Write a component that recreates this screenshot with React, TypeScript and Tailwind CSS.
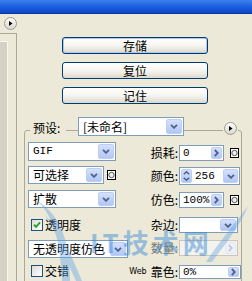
import React from 'react'

const mono = "font-['Liberation_Mono','DejaVu_Sans_Mono',monospace] text-[11px]"

function ChevDown({ color = '#4d6185' }: { color?: string }) {
  return (
    <svg width="8" height="5" viewBox="0 0 8 5">
      <path d="M1 0.8 L4 3.8 L7 0.8" fill="none" stroke={color} strokeWidth="1.8" />
    </svg>
  )
}

function ChevRight({ color = '#4d6185' }: { color?: string }) {
  return (
    <svg width="5" height="8" viewBox="0 0 5 8">
      <path d="M0.8 1 L3.8 4 L0.8 7" fill="none" stroke={color} strokeWidth="1.8" />
    </svg>
  )
}

function ArrowBtn({ w, dir = 'down', disabled }: { w: string; dir?: 'down' | 'right' | 'spin'; disabled?: boolean }) {
  const face = disabled
    ? 'border-[#e4e8f2] bg-[#eef1f8]'
    : 'border-[#bccdf6] bg-gradient-to-b from-[#d4e0fd] to-[#b2c7f5]'
  const c = disabled ? '#c3c9d8' : '#4d6185'
  return (
    <div className={`${w} h-full shrink-0 flex flex-col items-center justify-center gap-[2px] rounded-[2px] border ${face}`}>
      {dir === 'down' && <ChevDown color={c} />}
      {dir === 'right' && <ChevRight color={c} />}
      {dir === 'spin' && (
        <>
          <svg width="7" height="4" viewBox="0 0 7 4">
            <path d="M0.8 3.3 L3.5 0.8 L6.2 3.3" fill="none" stroke={c} strokeWidth="1.5" />
          </svg>
          <svg width="7" height="4" viewBox="0 0 7 4">
            <path d="M0.8 0.7 L3.5 3.2 L6.2 0.7" fill="none" stroke={c} strokeWidth="1.5" />
          </svg>
        </>
      )}
    </div>
  )
}

function Combo({ w, h, children, latin }: { w: string; h: string; children?: React.ReactNode; latin?: boolean }) {
  return (
    <div className={`${w} ${h} flex border border-[#7f9db9] bg-white p-[1px]`}>
      <div className={`flex-1 flex items-center pl-[3px] whitespace-nowrap ${latin ? mono : ''}`}>{children}</div>
      <ArrowBtn w="w-[16px]" />
    </div>
  )
}

function Field({ w, value, disabled }: { w: string; value?: string; disabled?: boolean }) {
  return (
    <div className={`${w} h-full flex border p-[1px] ${disabled ? 'border-[#c9c7ba] bg-[#f4f3ee]' : 'border-[#7f9db9] bg-white'}`}>
      <div className={`flex-1 flex items-center pl-[2px] whitespace-nowrap ${mono}`}>{value}</div>
      <ArrowBtn w="w-[11px]" dir="right" disabled={disabled} />
    </div>
  )
}

function XPButton({ children, def }: { children: React.ReactNode; def?: boolean }) {
  return (
    <div
      className={`h-[17px] w-[146px] flex items-center justify-center rounded-[3px] border border-[#003c74] bg-gradient-to-b from-white via-[#f6f5f0] to-[#dcd9cd] ${
        def ? 'shadow-[inset_0_0_0_1px_#aec6f0]' : ''
      }`}
    >
      {children}
    </div>
  )
}

function Flyout() {
  return (
    <svg width="13" height="13" viewBox="0 0 13 13">
      <defs>
        <linearGradient id="fly" x1="0" y1="0" x2="0" y2="1">
          <stop offset="0" stopColor="#ffffff" />
          <stop offset="1" stopColor="#d9d6ca" />
        </linearGradient>
      </defs>
      <circle cx="6.5" cy="6.5" r="6" fill="url(#fly)" stroke="#9d9b8e" />
      <path d="M5 4 L8.5 6.5 L5 9 Z" fill="#000" />
    </svg>
  )
}

function SqIcon() {
  return (
    <svg width="9" height="10" viewBox="0 0 9 10">
      <rect x="0.5" y="0.5" width="8" height="9" fill="#fff" stroke="#000" />
      <circle cx="4.5" cy="5" r="2.7" fill="#ededed" stroke="#444" strokeWidth="0.9" />
    </svg>
  )
}

function Check({ checked }: { checked?: boolean }) {
  return (
    <div className="w-[12px] h-[12px] shrink-0 border border-[#1c5180] bg-gradient-to-br from-[#dcdcd7] to-white flex items-center justify-center">
      {checked && (
        <svg width="8" height="8" viewBox="0 0 8 8">
          <path d="M1 3.6 L3 5.8 L7 1.4" fill="none" stroke="#21a121" strokeWidth="1.8" />
        </svg>
      )}
    </div>
  )
}

function Label({ children, muted }: { children: React.ReactNode; muted?: boolean }) {
  return (
    <div className={`w-[49px] flex justify-end items-center pr-[1px] whitespace-nowrap ${muted ? 'text-[#7d7b70]' : ''}`}>
      {children}
    </div>
  )
}

export default function App() {
  return (
    <div className="relative w-[252px] h-[281px] overflow-hidden bg-[#ece9d8] text-[12px] leading-none text-black font-['Noto_Sans_CJK_SC','DejaVu_Sans',sans-serif]">
      {/* title bar strip */}
      <div className="h-[14px] bg-gradient-to-b from-[#3b82ef] via-[#1d5fdf] to-[#0b46c6] border-b border-[#0a35a0]" />

      <div className="flex h-[267px]">
        {/* left strip */}
        <div className="w-[17px] flex flex-col">
          <div className="h-[19px] pt-[3px] pl-[4px]">
            <Flyout />
          </div>
          <div className="flex-1 border-t border-r border-[#aca899] pt-[7px]">
            <div className="h-full w-[8px] bg-[#d5d1c3] border-t border-r border-[#f7f6f1]" />
          </div>
        </div>

        {/* main */}
        <div className="flex-1 flex flex-col">
          <div className="flex flex-col gap-[8px] pt-[23px] pl-[45px]">
            <XPButton def>存储</XPButton>
            <XPButton>复位</XPButton>
            <XPButton>记住</XPButton>
          </div>

          {/* preset header over group border */}
          <div className="relative z-10 flex items-start h-[19px] mt-[13px] ml-[7px] w-[218px]">
            <div className="w-[6px]" />
            <div className="w-[36px] h-[12px] mt-[5px] pl-[3px] bg-[#ece9d8] whitespace-nowrap">预设:</div>
            <div className="w-[12px]" />
            <Combo w="w-[106px]" h="h-[19px]">[未命名]</Combo>
            <div className="w-[39px]" />
            <div className="mt-[5px] px-[1px] bg-[#ece9d8] flex">
              <Flyout />
            </div>
          </div>

          {/* group box */}
          <div className="-mt-[6px] ml-[7px] w-[218px] h-[170px] border border-[#aca899] rounded-[3px] pt-[11px] pl-[3px] flex flex-col">
            <div className="flex h-[24px]">
              <div className="w-[102px]">
                <Combo w="w-[88px]" h="h-[19px]" latin>GIF</Combo>
              </div>
              <div className="flex h-[16px] mt-[3px]">
                <Label>损耗:</Label>
                <Field w="w-[45px]" value="0" />
                <div className="ml-[6px] flex items-center">
                  <SqIcon />
                </div>
              </div>
            </div>

            <div className="flex h-[24px]">
              <div className="w-[102px] flex items-start gap-[3px]">
                <Combo w="w-[76px]" h="h-[18px]">可选择</Combo>
                <div className="mt-[4px]">
                  <SqIcon />
                </div>
              </div>
              <div className="flex h-[18px] mt-[1px]">
                <Label>颜色:</Label>
                <div className="w-[61px] h-full flex border border-[#7f9db9] bg-white p-[1px]">
                  <ArrowBtn w="w-[11px]" dir="spin" />
                  <div className={`flex-1 flex items-center pl-[3px] ${mono}`}>256</div>
                  <ArrowBtn w="w-[15px]" />
                </div>
              </div>
            </div>

            <div className="flex h-[25px]">
              <div className="w-[102px]">
                <Combo w="w-[88px]" h="h-[18px]">扩散</Combo>
              </div>
              <div className="flex h-[16px] mt-[2px]">
                <Label>仿色:</Label>
                <Field w="w-[45px]" value="100%" />
                <div className="ml-[6px] flex items-center">
                  <SqIcon />
                </div>
              </div>
            </div>

            <div className="flex h-[25px]">
              <div className="w-[102px] flex items-start pt-[4px] pl-[3px] gap-[2px]">
                <Check checked />
                <span>透明度</span>
              </div>
              <div className="flex h-[16px] mt-[2px]">
                <Label>杂边:</Label>
                <Combo w="w-[59px]" h="h-[16px]" />
              </div>
            </div>

            <div className="flex h-[25px]">
              <div className="w-[102px]">
                <Combo w="w-[100px]" h="h-[18px]">无透明度仿色</Combo>
              </div>
              <div className="flex h-[16px]">
                <Label muted>数量:</Label>
                <Field w="w-[59px]" disabled />
              </div>
            </div>

            <div className="flex h-[25px]">
              <div className="w-[102px] flex items-start pl-[3px] gap-[2px]">
                <Check />
                <span>交错</span>
              </div>
              <div className="flex h-[14px]">
                <Label>
                  <span className="text-[8px] mr-[4px] font-['DejaVu_Sans',sans-serif]">Web</span>靠色:
                </Label>
                <Field w="w-[62px]" value="0%" />
              </div>
            </div>
          </div>
        </div>
      </div>

      {/* site watermark */}
      <div className="pointer-events-none absolute inset-0">
        <svg width="252" height="281" viewBox="0 0 252 281" className="absolute left-0 top-0 opacity-40">
          <path d="M36 200 C52 214 60 236 62 281 L70 281 C70 240 60 214 36 200 Z" fill="#5ea3e6" />
          <path d="M44 214 C56 230 62 250 76 281 L82 281 C70 252 60 230 44 214 Z" fill="#5ea3e6" />
          <path d="M248 206 C236 222 222 238 206 262 L212 262 C228 240 240 226 248 206 Z" fill="#5ea3e6" />
        </svg>
        <div className="absolute left-[90px] top-[229px] text-[26px] font-bold tracking-[4px] text-[#2f86d8] opacity-45 whitespace-nowrap">
          IT技术网
        </div>
      </div>
    </div>
  )
}
